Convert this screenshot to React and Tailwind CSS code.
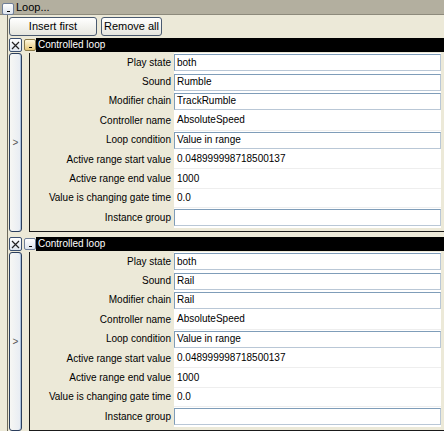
import React from "react";

const loops = [
    { sound: "Rumble", chain: "TrackRumble" },
    { sound: "Rail", chain: "Rail" },
];

function MinusBox({ yellow }) {
    return (<div className={`flex h-[12px] w-[12px] items-end justify-center rounded-[2px] border pb-[2px] ${yellow ? "border-[#8a7a4a] bg-gradient-to-b from-[#fff8dc] to-[#e8c878]" : "border-[#6f7f99] bg-gradient-to-b from-white to-[#dde4ee]"}`}>
        <div className="h-[1px] w-[3px] bg-black"/>
    </div>);
}

function Row({ label, value, box }) {
    return (<div className="flex h-[19.4px] items-center">
        <div className="w-[144px] pr-[3px] text-right">{label}</div>
        <div className="flex h-full w-[267px] items-center bg-white">
            {box ? (<div className="flex h-[17px] w-full items-center border border-t-[#7f9db9] border-l-[#7f9db9] border-b-[#b9c7d6] border-r-[#b9c7d6] pl-[2px]">{value}</div>) : (<div className="flex h-full w-full items-center border-b border-[#eeeeee] pl-[3px]">{value}</div>)}
        </div>
    </div>);
}

function ControlledLoop({ sound, chain, first }) {
    return (<div className={first ? "mt-[2px]" : "mt-[5px]"}>
        <div className="flex h-[14px] items-stretch">
            <div className="flex h-[14px] w-[13px] items-center justify-center rounded-[2px] border border-[#3c5070] bg-gradient-to-b from-white to-[#dfe6ef]">
                <svg width="9" height="9" viewBox="0 0 9 9">
                    <path d="M1 1 L8 8 M8 1 L1 8" stroke="#222" strokeWidth="1.2" fill="none"/>
                </svg>
            </div>
            <div className="ml-[2px] flex items-center">
                <MinusBox yellow={first}/>
            </div>
            <div className="flex flex-1 items-center bg-black pl-[2px] text-white">Controlled loop</div>
        </div>
        <div className="mt-[1px] flex h-[179px]">
            <div className="flex w-[13px] items-center justify-center rounded-[3px] border border-[#2a3d5c] bg-gradient-to-r from-[#f7f7f4] to-[#e7ecf3] text-[10px] text-[#555] shadow-[inset_-1px_0_0_#a9c0dc]">
                &gt;
            </div>
            <div className="ml-[7px] flex-1 border-b border-l border-[#1a1a1a]">
                <Row label="Play state" value="both" box/>
                <Row label="Sound" value={sound} box/>
                <Row label="Modifier chain" value={chain} box/>
                <Row label="Controller name" value="AbsoluteSpeed"/>
                <Row label="Loop condition" value="Value in range" box/>
                <Row label="Active range start value" value="0.048999998718500137"/>
                <Row label="Active range end value" value="1000"/>
                <Row label="Value is changing gate time" value="0.0"/>
                <Row label="Instance group" value="" box/>
            </div>
        </div>
    </div>);
}

export default function App() {
    return (<div className="h-[431px] w-[444px] overflow-hidden bg-[#ece9d8] text-[10px] leading-none text-black" style={{ fontFamily: '"Liberation Sans", Arial, sans-serif' }}>
        <div className="flex h-[15px] items-center border-b border-[#8d8a7c] bg-[#b3af9f] pl-[2px]">
            <div className="mt-[3px]">
                <MinusBox/>
            </div>
            <span className="ml-[2px] text-[11px]">Loop...</span>
        </div>
        <div className="ml-[7px] border-l border-[#6d6a5c] pl-[1px]">
            <div className="flex gap-[4px] pt-[2px]">
                <button className="h-[19px] w-[88px] rounded-[3px] border border-[#4a5a70] bg-gradient-to-b from-white to-[#e6e6de] text-[11px]">Insert first</button>
                <button className="h-[19px] w-[61px] rounded-[3px] border border-[#4a5a70] bg-gradient-to-b from-white to-[#e6e6de] text-[11px]">Remove all</button>
            </div>
            {loops.map((l, i) => (<ControlledLoop key={i} first={i === 0} sound={l.sound} chain={l.chain}/>))}
        </div>
    </div>);
}
